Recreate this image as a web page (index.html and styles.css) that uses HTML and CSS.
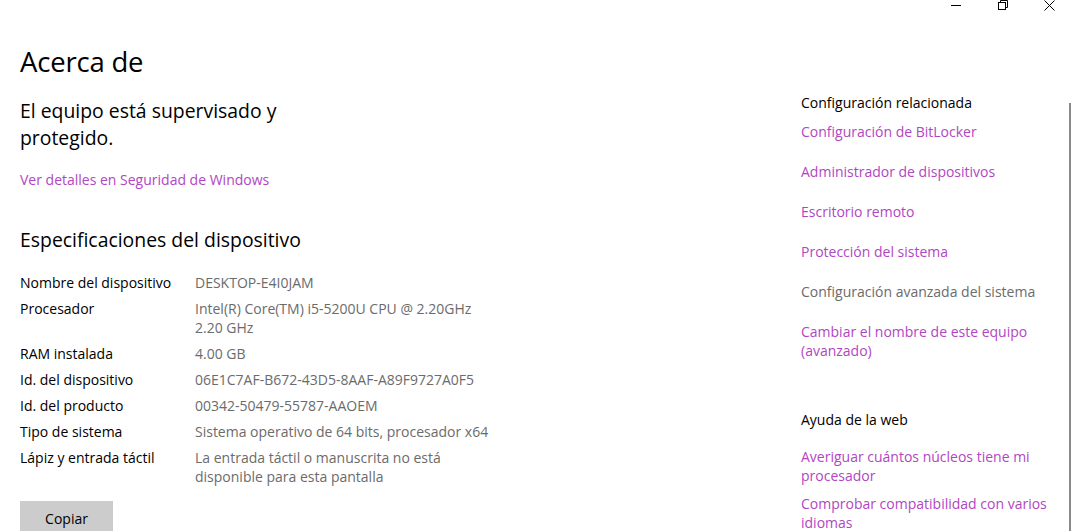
FILE: index.html
```html
<!DOCTYPE html>
<html lang="es">
<head>
<meta charset="utf-8">
<title>Acerca de</title>
<link rel="stylesheet" href="styles.css">
</head>
<body>
<div class="window">
  <div class="titlebar">
    <div class="ctrl" aria-label="Minimizar">
      <svg width="10" height="10" viewBox="0 0 10 10"><path d="M0 5.5H10" stroke="#000" stroke-width="1"/></svg>
    </div>
    <div class="ctrl" aria-label="Restaurar">
      <svg width="10" height="10" viewBox="0 0 10 10" fill="none" stroke="#000" stroke-width="1"><rect x="0.5" y="2.5" width="7" height="7"/><path d="M2.5 2.5V0.5H9.5V7.5H7.5"/></svg>
    </div>
    <div class="ctrl" aria-label="Cerrar">
      <svg width="11" height="11" viewBox="0 0 11 11" fill="none" stroke="#000" stroke-width="1"><path d="M0.5 0.5L10.5 10.5M10.5 0.5L0.5 10.5"/></svg>
    </div>
  </div>
  <div class="content">
    <main class="main">
      <h1 class="page-title">Acerca de</h1>
      <h2 class="status">El equipo está supervisado y<br>protegido.</h2>
      <a class="link status-link" href="#">Ver detalles en Seguridad de Windows</a>
      <h2 class="section-title">Especificaciones del dispositivo</h2>
      <div class="specs">
        <div class="label">Nombre del dispositivo</div><div class="value">DESKTOP-E4I0JAM</div>
        <div class="label">Procesador</div><div class="value">Intel(R) Core(TM) i5-5200U CPU @ 2.20GHz<br>2.20 GHz</div>
        <div class="label">RAM instalada</div><div class="value">4.00 GB</div>
        <div class="label">Id. del dispositivo</div><div class="value">06E1C7AF-B672-43D5-8AAF-A89F9727A0F5</div>
        <div class="label">Id. del producto</div><div class="value">00342-50479-55787-AAOEM</div>
        <div class="label">Tipo de sistema</div><div class="value">Sistema operativo de 64 bits, procesador x64</div>
        <div class="label">Lápiz y entrada táctil</div><div class="value">La entrada táctil o manuscrita no está<br>disponible para esta pantalla</div>
      </div>
      <button class="btn">Copiar</button>
    </main>
    <aside class="side">
      <div class="side-title">Configuración relacionada</div>
      <ul class="side-list">
        <li><a class="link" href="#">Configuración de BitLocker</a></li>
        <li><a class="link" href="#">Administrador de dispositivos</a></li>
        <li><a class="link" href="#">Escritorio remoto</a></li>
        <li><a class="link" href="#">Protección del sistema</a></li>
        <li><span class="muted">Configuración avanzada del sistema</span></li>
        <li><a class="link" href="#">Cambiar el nombre de este equipo<br>(avanzado)</a></li>
      </ul>
      <div class="side-title help-title">Ayuda de la web</div>
      <ul class="side-list tight">
        <li><a class="link" href="#">Averiguar cuántos núcleos tiene mi<br>procesador</a></li>
        <li><a class="link" href="#">Comprobar compatibilidad con varios<br>idiomas</a></li>
      </ul>
    </aside>
    <div class="scrollbar"></div>
  </div>
</div>
</body>
</html>
```
FILE: styles.css
```css
* { box-sizing: border-box; }
html, body {
  margin: 0;
  padding: 0;
  background: #ffffff;
  height: 100%;
  overflow: hidden;
}
body {
  font-family: "Open Sans", "Noto Sans", "Liberation Sans", sans-serif;
  color: #000;
  font-size: 14px;
}
.window {
  width: 1073px;
  height: 531px;
  overflow: hidden;
}
.titlebar {
  display: flex;
  justify-content: flex-end;
  height: 12px;
}
.ctrl {
  width: 47px;
  height: 12px;
  display: flex;
  justify-content: center;
  align-items: flex-start;
}
.ctrl svg { display: block; }
.content {
  display: flex;
  align-items: flex-start;
}
.main {
  width: 801px;
  flex: none;
  padding-left: 20px;
  display: flex;
  flex-direction: column;
  align-items: flex-start;
}
.page-title {
  margin: 32px 0 0;
  font-size: 27.5px;
  line-height: 36px;
  font-weight: 400;
  letter-spacing: -0.2px;
}
.status {
  margin: 17px 0 0;
  font-size: 19.4px;
  line-height: 27px;
  font-weight: 400;
}
.link {
  color: #b146c2;
  text-decoration: none;
}
.status-link {
  margin-top: 19px;
  line-height: 19px;
  font-size: 14px;
}
.section-title {
  margin: 37px 0 0;
  font-size: 19.4px;
  line-height: 27px;
  font-weight: 400;
}
.specs {
  margin-top: 20px;
  display: grid;
  grid-template-columns: 175px 300px;
  row-gap: 7px;
  font-size: 14px;
  line-height: 19px;
}
.label { color: #000; white-space: nowrap; }
.value { color: #6b6b6b; white-space: nowrap; }
.btn {
  margin-top: 15px;
  width: 93px;
  height: 34px;
  border: none;
  background: #cccccc;
  font-family: inherit;
  font-size: 14px;
  color: #000;
  padding: 0;
}
.side {
  width: 250px;
  flex: none;
  padding-top: 81px;
  font-size: 14px;
  line-height: 19px;
}
.side-title { color: #000; }
.side-list {
  list-style: none;
  margin: 10px 0 0;
  padding: 0;
  display: flex;
  flex-direction: column;
  gap: 21px;
  white-space: nowrap;
}
.side-list.tight { margin-top: 18px; gap: 9px; }
.muted { color: #6b6b6b; }
.help-title { margin-top: 50px; }
.scrollbar {
  margin-left: auto;
  margin-right: 2px;
  margin-top: 91px;
  width: 2px;
  height: 440px;
  background: #8a8a8a;
}
```
